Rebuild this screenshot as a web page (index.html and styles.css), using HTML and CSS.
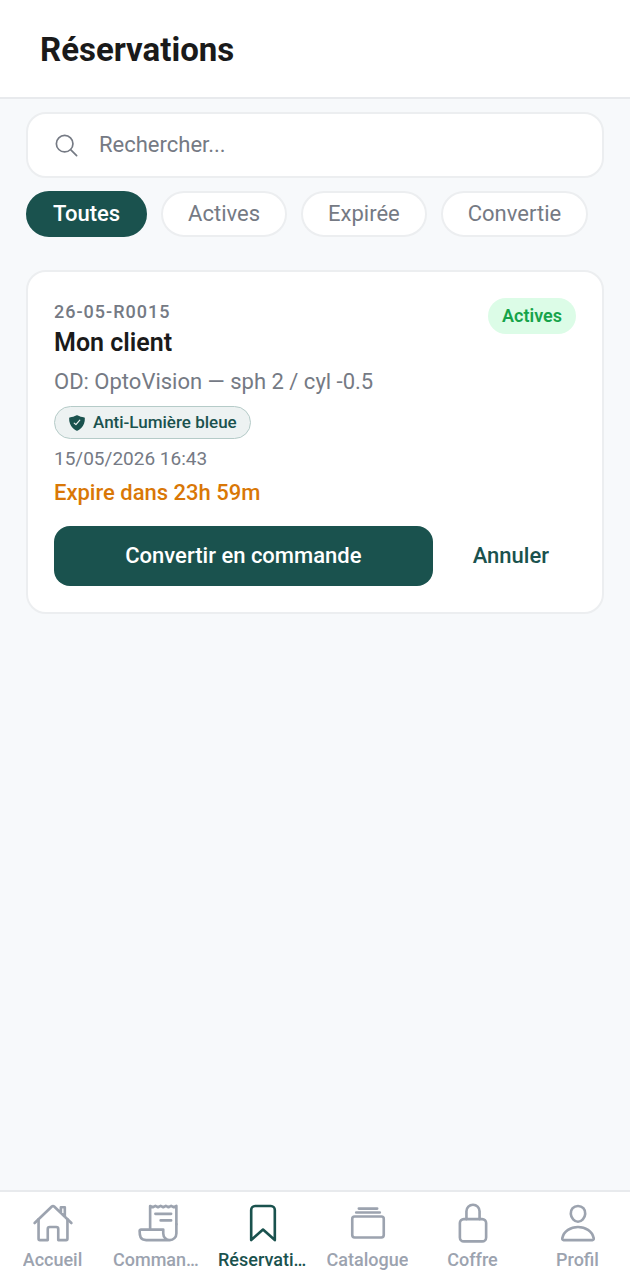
FILE: index.html
```html
<!DOCTYPE html>
<html lang="fr">
<head>
    <meta charset="UTF-8">
    <meta name="viewport" content="width=device-width, initial-scale=1">
    <title>Réservations</title>
    <link rel="stylesheet" href="styles.css">
</head>
<body>
    <header class="header">
        <h1>Réservations</h1>
    </header>

    <main class="content">
        <label class="search">
            <svg class="search-icon" viewBox="0 0 512 512" aria-hidden="true">
                <path d="M221.09 64a157.09 157.09 0 10157.09 157.09A157.1 157.1 0 00221.09 64z"/>
                <path d="M338.29 338.29L448 448"/>
            </svg>
            <input type="search" placeholder="Rechercher..." aria-label="Rechercher">
        </label>

        <div class="filters">
            <button type="button" class="filter active">Toutes</button>
            <button type="button" class="filter">Actives</button>
            <button type="button" class="filter">Expirée</button>
            <button type="button" class="filter">Convertie</button>
        </div>

        <article class="card">
            <div class="card-top">
                <div>
                    <div class="number">26-05-R0015</div>
                    <h2>Mon client</h2>
                </div>
                <span class="badge">Actives</span>
            </div>
            <p class="lens">OD: OptoVision — sph 2 / cyl -0.5</p>
            <span class="tag">
                <svg class="tag-icon" viewBox="0 0 512 512" aria-hidden="true">
                    <path d="M479.07 111.36a16 16 0 00-13.15-14.74c-86.5-15.52-122.61-26.74-203.33-63.2a16 16 0 00-13.18 0C168.69 69.88 132.58 81.1 46.08 96.62a16 16 0 00-13.15 14.74c-3.85 61.11 4.36 118.05 24.43 169.24A349.47 349.47 0 00129 393.11c53.47 56.73 110.24 81.37 121.07 85.73a16 16 0 0012 0c10.83-4.36 67.6-29 121.07-85.73A349.47 349.47 0 00454.64 280.6c20.07-51.19 28.28-108.13 24.43-169.24zm-131 75.11l-110.8 128a16 16 0 01-11.41 5.53h-.66a16 16 0 01-11-4.41l-49.2-46.42a16 16 0 1122-23.29l37 34.89 99.78-115.28a16 16 0 1124.2 20.94z"/>
                </svg>
                Anti-Lumière bleue
            </span>
            <div class="date">15/05/2026 16:43</div>
            <div class="expiry">Expire dans 23h 59m</div>
            <div class="actions">
                <button type="button" class="convert">Convertir en commande</button>
                <button type="button" class="cancel">Annuler</button>
            </div>
        </article>
    </main>

    <nav class="tabs">
        <a href="#accueil" class="tab">
            <svg viewBox="0 0 512 512" aria-hidden="true">
                <path d="M80 212v236a16 16 0 0016 16h96V328a24 24 0 0124-24h80a24 24 0 0124 24v136h96a16 16 0 0016-16V212"/>
                <path d="M480 256L266.89 52c-5-5.28-16.69-5.34-21.78 0L32 256M400 179V64h-48v69"/>
            </svg>
            <span>Accueil</span>
        </a>
        <a href="#commandes" class="tab">
            <svg viewBox="0 0 512 512" aria-hidden="true">
                <path d="M160 336V48l32 16 32-16 31.94 16 32.37-16L320 64l31.79-16 31.93 16L416 48l32.01 16L480 48v224"/>
                <path d="M480 272v112a80 80 0 01-80 80h0a80 80 0 01-80-80v-48H48a15.86 15.86 0 00-16 16c0 64 6.74 112 80 112h288M224 144h192M288 224h128"/>
            </svg>
            <span>Commandes</span>
        </a>
        <a href="#reservations" class="tab current" aria-current="page">
            <svg viewBox="0 0 512 512" aria-hidden="true">
                <path d="M352 48H160a48 48 0 00-48 48v368l144-128 144 128V96a48 48 0 00-48-48z"/>
            </svg>
            <span>Réservations</span>
        </a>
        <a href="#catalogue" class="tab">
            <svg viewBox="0 0 512 512" aria-hidden="true">
                <rect x="64" y="176" width="384" height="256" rx="28.87"/>
                <path d="M144 80h224M112 128h288"/>
            </svg>
            <span>Catalogue</span>
        </a>
        <a href="#coffre" class="tab">
            <svg viewBox="0 0 512 512" aria-hidden="true">
                <path d="M336 208v-95a80 80 0 00-160 0v95"/>
                <rect x="96" y="208" width="320" height="272" rx="48"/>
            </svg>
            <span>Coffre</span>
        </a>
        <a href="#profil" class="tab">
            <svg viewBox="0 0 512 512" aria-hidden="true">
                <path d="M344 144c-3.92 52.87-44 96-88 96s-84.15-43.12-88-96c-4-55 35-96 88-96s92 42 88 96z"/>
                <path d="M256 304c-87 0-175.3 48-191.64 138.6C62.39 453.52 68.57 464 80 464h352c11.44 0 17.62-10.48 15.65-21.4C431.3 352 343 304 256 304z"/>
            </svg>
            <span>Profil</span>
        </a>
    </nav>
</body>
</html>
```
FILE: styles.css
```css
* {
    box-sizing: border-box;
}
body {
    margin: 0;
    min-height: 100vh;
    display: flex;
    flex-direction: column;
    background-color: #f7f9fb;
    color: #1a1a1a;
    font-family: Roboto, sans-serif;
    font-size: 22px;
    line-height: 28px;
}
h1, h2, p {
    margin: 0;
}
button, input {
    font: inherit;
}
button {
    border: none;
    cursor: pointer;
}
svg {
    display: block;
    flex-shrink: 0;
    fill: none;
    stroke: currentColor;
    stroke-width: 32;
    stroke-linecap: round;
    stroke-linejoin: round;
}
.header {
    padding: 29px 40px 26px;
    background-color: #fff;
    border-bottom: 2px solid #e8eaed;
}
h1 {
    font-size: 33px;
    line-height: 42px;
    font-weight: 700;
}
.content {
    flex: 1;
    padding: 13px 26px;
}
.search {
    display: flex;
    align-items: center;
    gap: 19px;
    height: 66px;
    padding: 0 25px;
    background-color: #fff;
    border: 2px solid #eceef0;
    border-radius: 20px;
    color: #757a84;
}
.search-icon {
    width: 27px;
    height: 27px;
}
.search input {
    flex: 1;
    min-width: 0;
    padding: 0;
    border: none;
    outline: none;
    background: none;
    color: #1a1a1a;
}
.search input::placeholder {
    color: #757a84;
    opacity: 1;
}
.filters {
    display: flex;
    gap: 14px;
    margin: 13px 0 33px;
}
.filter {
    padding: 7px 25px;
    background-color: #fff;
    border: 2px solid #eceef0;
    border-radius: 24px;
    color: #757a84;
}
.filter.active {
    background-color: #1a524e;
    border-color: #1a524e;
    color: #fff;
    font-weight: 500;
}
.card {
    padding: 26px;
    background-color: #fff;
    border: 2px solid #eceef0;
    border-radius: 20px;
}
.card-top {
    display: flex;
    justify-content: space-between;
    align-items: flex-start;
}
.number {
    color: #757a84;
    font-size: 18px;
    font-weight: 500;
    letter-spacing: 1px;
}
h2 {
    font-size: 25px;
    line-height: 34px;
    font-weight: 600;
}
.badge {
    padding: 4px 14px;
    background-color: #dcfce7;
    border-radius: 18px;
    color: #16a34a;
    font-size: 18px;
    font-weight: 600;
}
.lens {
    margin: 8px 0 10px;
    color: #757a84;
}
.tag {
    display: flex;
    align-items: center;
    gap: 7px;
    width: fit-content;
    padding: 2px 13px;
    background-color: #edf2f2;
    border: 1px solid #b5cbc8;
    border-radius: 17px;
    color: #1a524e;
    font-size: 17px;
    line-height: 27px;
    font-weight: 500;
}
.tag-icon {
    width: 18px;
    height: 18px;
    fill: currentColor;
    stroke: none;
}
.date {
    margin-top: 6px;
    color: #757a84;
    font-size: 19px;
}
.expiry {
    margin-top: 6px;
    color: #d97706;
    font-weight: 500;
}
.actions {
    display: flex;
    gap: 13px;
    margin-top: 19px;
}
.convert, .cancel {
    padding: 16px 27px;
    border-radius: 16px;
    font-weight: 500;
}
.convert {
    flex: 1;
    background-color: #1a524e;
    color: #fff;
}
.cancel {
    background: none;
    color: #1a524e;
}
.tabs {
    display: flex;
    padding: 10px 0 6px;
    background-color: #fff;
    border-top: 2px solid #e8eaed;
}
.tab {
    flex: 1;
    min-width: 0;
    display: flex;
    flex-direction: column;
    align-items: center;
    gap: 2px;
    padding: 0 8px;
    color: #9ca3af;
    font-size: 18px;
    font-weight: 500;
    text-decoration: none;
}
.tab svg {
    width: 42px;
    height: 42px;
}
.tab span {
    max-width: 100%;
    overflow: hidden;
    text-overflow: ellipsis;
    white-space: nowrap;
}
.tab.current {
    color: #1a524e;
}
```
